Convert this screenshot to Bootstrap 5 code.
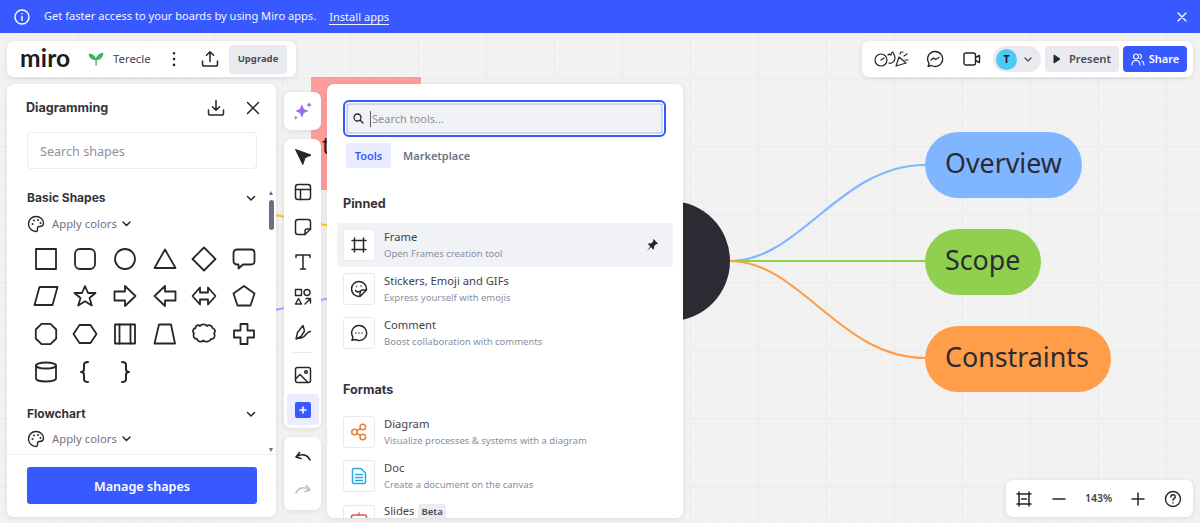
<!DOCTYPE html>
<html lang="en">
<head>
<meta charset="UTF-8">
<meta name="viewport" content="width=device-width, initial-scale=1.0">
<title>Miro board</title>
<link href="https://cdn.jsdelivr.net/npm/bootstrap@5.3.0/dist/css/bootstrap.min.css" rel="stylesheet">
<style>
html, body { height: 100%; }
body {
  margin: 0; position: relative; height: 523px; overflow: hidden;
  font-family: "Noto Sans", sans-serif; font-size: 12px; color: #2b2c33;
  background-color: #f2f2f2;
  background-image:
    linear-gradient(#ebebeb 1px, transparent 1px), linear-gradient(90deg, #ebebeb 1px, transparent 1px),
    linear-gradient(#efefef 1px, transparent 1px), linear-gradient(90deg, #efefef 1px, transparent 1px);
  background-size: 68px 68px, 68px 68px, 13.6px 13.6px, 13.6px 13.6px;
  background-position: 10px 10px;
}
.ico { fill: none; stroke-linecap: round; stroke-linejoin: round; display: block; flex: none; }
.ico:not([stroke]) { stroke: #26262b; }
.ico:not([stroke-width]) { stroke-width: 1.8; }

/* board */
.board-lines { position: absolute; left: 0; top: 0; }
.sticky-red { position: absolute; left: 311px; top: 77px; width: 110px; height: 113px; background: #ff9d9d; }
.sticky-letter { position: absolute; left: 322px; top: 130px; font-size: 24px; line-height: 30px; color: #222; }
.mind-node {
  position: absolute; left: 925px; height: 66px; border-radius: 33px; padding: 0 0 3px 20px;
  display: flex; align-items: center; font-size: 26.8px; color: #2b2c33;
}
.node-blue { top: 132px; width: 157px; background: #80b5ff; }
.node-green { top: 229px; width: 116px; background: #8fd14f; }
.node-orange { top: 326px; width: 186px; background: #ff9d48; }

/* banner */
.promo-bar { position: relative; height: 33px; background: #3859ff; color: #f4f5ff; padding: 0 14px; font-size: 11.1px; }
.promo-text { margin-left: 14px; }
.promo-link { margin-left: 13px; color: #f4f5ff; text-decoration: none; border-bottom: 1px solid #f4f5ff; line-height: 15px; }
.promo-close { margin-left: auto; margin-right: -2px; }

/* floating panels */
.float-panel { position: relative; background: #fff; border-radius: 7px; box-shadow: 0 1px 5px rgba(30,30,50,.1); }
.top-row { position: relative; padding: 8px 7px 0; }
.board-bar { width: 289px; height: 36px; padding: 0 3px 0 13px; }
.miro-word { font-family: "Lato", sans-serif; font-weight: 700; font-size: 24.5px; line-height: 36px; width: 52px; letter-spacing: .2px; color: #1c1c1e; margin-top: -3px; }
.sprout { margin-left: 16px; flex: none; }
.board-name { margin-left: 9px; width: 58px; color: #3f4149; font-size: 11.4px; }
.upload-ico { margin-left: 24px; }
.btn-upgrade { width: 58px; height: 29px; padding: 0; margin-left: 10px; background: #e9eaef; border: 0; border-radius: 4px; font-size: 9.5px; font-weight: 700; color: #4a4c57; }
.collab-bar { width: 331px; height: 36px; padding: 0 6px 0 12px; }
.chat-ico { margin-left: 16px; }
.video-ico { margin-left: 19px; }
.avatar-pill { width: 48px; height: 26px; border-radius: 13px; background: #e9eaef; padding: 0 4px 0 3px; margin-left: 12px; }
.avatar-dot { width: 21px; height: 21px; border-radius: 50%; background: #4cc9f5; font-size: 10.5px; font-weight: 700; line-height: 21px; text-align: center; color: #1c1c1e; }
.btn-present { width: 74px; height: 26px; padding: 0; margin-left: 4px; background: #e9eaef; border: 0; border-radius: 4px; font-size: 11.3px; font-weight: 600; color: #4a4c57; }
.btn-share { width: 64px; height: 26px; padding: 0; margin-left: 4px; background: #3859ff; border: 0; border-radius: 4px; font-size: 11px; font-weight: 600; color: #fff; }
.btn-share:hover, .btn-manage:hover { background: #3859ff; color: #fff; }

.work-row { position: relative; padding: 7px 0 0 7px; }
.shapes-panel { width: 269px; height: 433px; }
.panel-title { font-family: "Inter", sans-serif; font-weight: 700; font-size: 12.6px; color: #33343b; margin: 0; }
.section-title { font-size: 12px; }
.shapes-head { height: 48px; padding: 0 16px 0 19px; }
.head-icons { gap: 21px; }
.shapes-search {
  width: 230px; height: 37px; margin-left: 20px; font-size: 12.6px; border: 1px solid #ebecf0; border-radius: 4px; padding: 1px 12px 0; color: #2b2c33;
}
.shapes-search::placeholder { color: #8d90a0; opacity: 1; }
.shapes-scroll { position: relative; height: 285px; overflow: hidden; padding: 20px 0 0 20px; }
.section-head { width: 229px; height: 18px; }
.apply-row { height: 18px; margin-top: 8px; color: #70727e; font-size: 11.3px; }
.apply-label { margin-left: 7px; }
.apply-chevron { margin-left: 5px; }
.shape-grid { display: grid; grid-template-columns: repeat(6, 39.6px); grid-auto-rows: 37.6px; margin: 7px 0 0 -1px; justify-items: center; align-items: center; }
.flow-head { margin-top: 15px; }
.flow-head + .apply-row { margin-top: 7px; }
.scroll-track { position: absolute; right: 0; top: 20px; width: 9px; height: 265px; }
.scroll-thumb { position: absolute; left: 2px; top: 11px; width: 5px; height: 30px; border-radius: 3px; background: #69708a; }
.scroll-up, .scroll-down { position: absolute; left: 2px; width: 0; height: 0; border-left: 2.5px solid transparent; border-right: 2.5px solid transparent; }
.scroll-up { top: 2px; border-bottom: 4px solid #69708a; }
.scroll-down { bottom: 2px; border-top: 4px solid #69708a; }
.shapes-foot { border-top: 1px solid #f0f0f3; height: 63px; padding: 12px 0 0 20px; }
.btn-manage { width: 230px; height: 37px; padding: 3px 0 0; background: #3859ff; color: #fff; border: 0; border-radius: 3px; font-weight: 600; font-size: 12.6px; }

.tool-col { width: 37px; margin-left: 8px; padding-top: 8px; }
.tool-ai { height: 38px; }
.tool-main { height: 289px; margin-top: 9px; }
.tool-undo { height: 73px; margin-top: 9px; }
.tool-cell { height: 35px; }
.tool-sep { width: 19px; height: 1px; background: #e9eaef; margin: 3px auto 4px; }
.tool-plus { width: 32px; height: 31px; margin: 2px auto 0; background: #e9edff; border-radius: 3px; }
.plus-tile { width: 16px; height: 16px; background: #3859ff; border-radius: 2px; }

.tools-panel { width: 356px; height: 434px; margin-left: 6px; overflow: hidden; }
.tool-search { width: 323px; height: 37px; margin: 16px 0 0 16px; background: #f1f2f5; border: 2px solid #3859ff; border-radius: 6px; box-shadow: inset 0 0 0 1.5px #fff, inset 0 0 0 2.5px #a9b5ff; padding: 0 0 0 8px; }
.tool-search input { border: 0; background: transparent; padding: 0 0 1px; font-size: 11px; height: 100%; margin-left: 1px; box-shadow: none; color: #2b2c33; }
.tool-search input::placeholder { color: #8d90a0; opacity: 1; }
.caret-mark { width: 1px; height: 16px; background: #5b5d68; margin-left: 6px; flex: none; }
.tab-row { margin: 6px 0 0 19px; gap: 12px; }
.tab-row .nav-link { padding: 0; height: 25px; line-height: 25px; font-size: 11px; font-weight: 600; color: #6e7186; border-radius: 3px; }
.tab-row .nav-link.active { width: 45px; text-align: center; background: #e9edff; color: #3859ff; }
.group-title { font-family: "Inter", sans-serif; font-weight: 700; font-size: 12.6px; color: #33343b; margin: 0 0 0 16px; line-height: 16px; }
.pinned-title { margin-top: 28px; }
.formats-title { margin-top: 27px; }
.tool-list { margin: 11px 0 0 10px; width: 336px; border-radius: 0; }
.formats-title + .tool-list { margin-top: 12px; }
.tool-list .list-group-item { border: 0; background: transparent; padding: 7px 6px; height: 44px; display: flex; align-items: center; color: #2b2c33; border-radius: 4px; }
.tool-list .list-group-item.row-hover { background: #f1f2f5; }
.tool-box { width: 32px; height: 32px; background: #fff; border: 1px solid #e9eaef; border-radius: 3px; display: flex; align-items: center; justify-content: center; flex: none; margin-right: 9px; }
.tool-text { margin-top: -2px; }
.tool-name { font-size: 11.2px; line-height: 15px; color: #3f4149; display: block; }
.tool-desc { font-size: 9.5px; line-height: 13px; color: #8a8d9e; display: block; margin-top: 3px; }
.beta-tag { background: #ebecf0; color: #4a4c57; font-size: 9.5px; font-weight: 600; padding: 1px 3px; border-radius: 3px; margin-left: 4px; }

.zoom-bar { position: absolute; left: 1006px; top: 480px; width: 187px; height: 37px; padding: 0 11px 0 9px; }
.zoom-num { font-size: 10.5px; font-weight: 600; color: #3f4149; }
</style>
</head>
<body>

<!-- board contents -->
<div class="sticky-red"></div>
<div class="sticky-letter">t</div>
<svg class="board-lines" width="1200" height="523" fill="none" stroke-width="2.2">
  <circle cx="670" cy="261" r="60" fill="#2b2c33"/>
  <path d="M730 261C800 261 840 165 925 165" stroke="#80b5ff"/>
  <path d="M730 261H925" stroke="#8fd14f"/>
  <path d="M730 261C800 261 840 358 925 358" stroke="#ff9d48"/>
  <path d="M275 215L330 226" stroke="#fac710"/>
  <path d="M275 310L330 298" stroke="#a6a6ff"/>
</svg>
<div class="mind-node node-blue">Overview</div>
<div class="mind-node node-green">Scope</div>
<div class="mind-node node-orange">Constraints</div>

<!-- banner -->
<div class="promo-bar d-flex align-items-center">
  <svg class="ico" width="16" height="16" viewBox="0 0 16 16" stroke="#fff" stroke-width="1.4"><circle cx="8" cy="8" r="7"/><path d="M8 7.400v4M8 4.600v.2"/></svg>
  <span class="promo-text">Get faster access to your boards by using Miro apps.</span>
  <a class="promo-link" href="#">Install apps</a>
  <svg class="ico promo-close" width="12" height="12" viewBox="0 0 12 12" stroke="#fff" stroke-width="1.3"><path d="M2 2l8 8M10 2l-8 8"/></svg>
</div>

<!-- top bars -->
<div class="top-row d-flex justify-content-between">
  <div class="float-panel board-bar d-flex align-items-center">
    <span class="miro-word">miro</span>
    <svg class="sprout" width="16" height="14" viewBox="0 0 16 14"><path d="M7.400 13.500V8C4 8 1 6.500.6 1.800 4.500 1.600 7 3.500 8 6.500 8.800 3.500 11 1.200 15.400.8 15.200 5.500 12.500 8 8.800 8v5.500z" fill="#3eb35f"/></svg>
    <span class="board-name">Terecle</span>
    <svg class="ico" width="6" height="16" viewBox="0 0 6 16" stroke-width="2.6"><path d="M3 2.200v.1M3 8v.1M3 13.800v.1"/></svg>
    <svg class="ico upload-ico" width="18" height="18" viewBox="0 0 18 18" stroke-width="1.5"><path d="M9 11.500V2M5.500 5.200L9 1.700l3.500 3.500M1.500 11v3.200c0 1 .8 1.800 1.800 1.800h11.400c1 0 1.800-.8 1.800-1.800V11"/></svg>
    <button type="button" class="btn btn-upgrade">Upgrade</button>
  </div>
  <div class="float-panel collab-bar d-flex align-items-center">
    <svg class="ico" width="36" height="20" viewBox="0 0 36 20" stroke-width="1.2"><circle cx="7" cy="11" r="6"/><path d="M7 11l3-2"/><path d="M14 6c1-1 2-1 3 0 0-2 1-3 2-3 0 2 2 3 2 6 0 4-4 6-6 5"/><path d="M22 17l3-9 7 6zM26 5l1-2M30 7l3-2M31 11l3 0M28 3l1 0"/></svg>
    <svg class="ico chat-ico" width="18" height="18" viewBox="0 0 18 18" stroke-width="1.4"><path d="M9 1.500a7.500 7.500 0 1 1-3.600 14l-3.200.8.800-3A7.500 7.500 0 0 1 9 1.500z"/><path d="M5 10l2.500-2 2 1.500L13 7.500"/></svg>
    <svg class="ico video-ico" width="18" height="16" viewBox="0 0 18 16" stroke-width="1.4"><rect x="1" y="2" width="11.500" height="12" rx="2"/><path d="M12.500 6.500l4-2v7l-4-2"/></svg>
    <div class="avatar-pill d-flex align-items-center justify-content-between">
      <span class="avatar-dot">T</span>
      <svg class="ico me-1" width="10" height="7" viewBox="0 0 10 7" stroke="#4a4c57" stroke-width="1.3"><path d="M2 2l3 3 3-3"/></svg>
    </div>
    <button type="button" class="btn btn-present d-flex align-items-center justify-content-center gap-2">
      <svg width="8" height="10" viewBox="0 0 8 10"><path d="M1 1l6 4-6 4z" fill="#26262b" stroke="#26262b" stroke-linejoin="round"/></svg>Present
    </button>
    <button type="button" class="btn btn-share d-flex align-items-center justify-content-center gap-1">
      <svg class="ico" width="14" height="13" viewBox="0 0 14 13" stroke="#fff" stroke-width="1.1"><circle cx="5" cy="3.500" r="2.500"/><path d="M1 12c0-3 2-4.500 4-4.500S9 9 9 12M9 1.200a2.500 2.500 0 0 1 0 4.500M11 8c1.500.8 2 2 2 4"/></svg>Share
    </button>
  </div>
</div>

<!-- panels -->
<div class="work-row d-flex align-items-start">
  <div class="float-panel shapes-panel">
    <div class="shapes-head d-flex align-items-center justify-content-between">
      <h2 class="panel-title">Diagramming</h2>
      <div class="head-icons d-flex align-items-center">
        <svg class="ico" width="18" height="18" viewBox="0 0 18 18" stroke-width="1.5"><path d="M9 1.500V11M5.500 7.800L9 11.300l3.500-3.500M1.500 11v3.200c0 1 .8 1.800 1.800 1.800h11.400c1 0 1.800-.8 1.800-1.800V11"/></svg>
        <svg class="ico" width="14" height="14" viewBox="0 0 14 14" stroke-width="1.5"><path d="M1.500 1.500l11 11M12.500 1.500l-11 11"/></svg>
      </div>
    </div>
    <input class="form-control shapes-search" type="text" placeholder="Search shapes">
    <div class="shapes-scroll">
      <div class="section-head d-flex align-items-center justify-content-between">
        <h3 class="panel-title section-title">Basic Shapes</h3>
        <svg class="ico" width="10" height="7" viewBox="0 0 10 7" stroke-width="1.5"><path d="M1.500 1.500L5 5l3.500-3.500"/></svg>
      </div>
      <div class="apply-row d-flex align-items-center">
        <svg class="ico" width="18" height="18" viewBox="0 0 18 18" stroke-width="1.4"><path d="M9 1.500c4.500 0 7.500 3 7.500 6.500 0 2.500-2 3.500-4 3.500-1.500 0-2.500 1-2 2.500.3 1.500-.5 2.500-1.500 2.500C5 16.500 1.500 13 1.500 9S4.500 1.500 9 1.500z"/><path d="M5.500 9v.1M7 5.500v.1M11 5v.1M13.500 8v.1" stroke-width="2"/></svg>
        <span class="apply-label">Apply colors</span>
        <svg class="ico apply-chevron" width="9" height="6" viewBox="0 0 9 6" stroke-width="1.5"><path d="M1 1l3.500 3.500L8 1"/></svg>
      </div>
      <div class="shape-grid">
        <svg class="ico" width="24" height="24" viewBox="0 0 24 24"><rect x="2" y="2" width="20" height="20"/></svg>
        <svg class="ico" width="24" height="24" viewBox="0 0 24 24"><rect x="2" y="2" width="20" height="20" rx="5"/></svg>
        <svg class="ico" width="24" height="24" viewBox="0 0 24 24"><circle cx="12" cy="12" r="10"/></svg>
        <svg class="ico" width="24" height="24" viewBox="0 0 24 24"><path d="M12 2.500L22.500 21h-21z"/></svg>
        <svg class="ico" width="26" height="26" viewBox="0 0 26 26"><path d="M13 1.500L24.500 13 13 24.500 1.500 13z"/></svg>
        <svg class="ico" width="24" height="24" viewBox="0 0 24 24"><path d="M5 2.500h14c2 0 3.500 1.500 3.500 3.500v8c0 2-1.500 3.500-3.500 3.500H11l-4.500 4v-4H5c-2 0-3.500-1.500-3.500-3.500V6C1.500 4 3 2.500 5 2.500z"/></svg>

        <svg class="ico" width="26" height="24" viewBox="0 0 26 24"><path d="M6.500 3h18L19.500 21h-18z"/></svg>
        <svg class="ico" width="24" height="24" viewBox="0 0 24 24"><path d="M12 2l3 7h7.500l-6 5 2.300 7.500L12 17.200 5.200 21.500 7.500 14l-6-5H9z"/></svg>
        <svg class="ico" width="24" height="24" viewBox="0 0 24 24"><path d="M1.500 7.500H12V2l10.500 10L12 22v-5.500H1.500z"/></svg>
        <svg class="ico" width="24" height="24" viewBox="0 0 24 24"><path d="M22.500 7.500H12V2L1.500 12 12 22v-5.500h10.500z"/></svg>
        <svg class="ico" width="26" height="24" viewBox="0 0 26 24"><path d="M1.500 12L9 3.500v5h8v-5l7.500 8.500-7.500 8.500v-5H9v5z"/></svg>
        <svg class="ico" width="24" height="24" viewBox="0 0 24 24"><path d="M12 2l10.500 7.500-4 12h-13l-4-12z"/></svg>

        <svg class="ico" width="24" height="24" viewBox="0 0 24 24"><path d="M7.500 1.800h9l5.700 5.700v9l-5.700 5.700h-9l-5.700-5.700v-9z"/></svg>
        <svg class="ico" width="26" height="24" viewBox="0 0 26 24"><path d="M7.500 3h11l6 9-6 9h-11l-6-9z"/></svg>
        <svg class="ico" width="24" height="24" viewBox="0 0 24 24"><rect x="2" y="2.500" width="20" height="19"/><path d="M6.500 2.500v19M17.500 2.500v19"/></svg>
        <svg class="ico" width="24" height="24" viewBox="0 0 24 24"><path d="M6 2.500h12l4 19H1.500z"/></svg>
        <svg class="ico" width="26" height="24" viewBox="0 0 26 24"><path d="M9 4c1.500-2 5-2.500 7 0 1.500-1.500 5-1 5.500 2 2.500 1 3.500 3.500 1.500 5.500 2 2.500 0 6-3 5.500-1 3-6 3.500-7.500 1.500-2 2-6 1.500-6.500-1.500-3 0-4.500-3-3-5.500-2-2-1-5 1.500-5.500 0-3 3-3.500 4.500-2z"/></svg>
        <svg class="ico" width="24" height="24" viewBox="0 0 24 24"><path d="M8.500 2h7v6.500H22v7h-6.500V22h-7v-6.500H2v-7h6.500z"/></svg>

        <svg class="ico" width="24" height="24" viewBox="0 0 24 24"><ellipse cx="12" cy="5.500" rx="10" ry="3"/><path d="M2 5.500v13c0 1.700 4.500 3 10 3s10-1.300 10-3v-13"/></svg>
        <svg class="ico" width="24" height="24" viewBox="0 0 24 24" stroke-width="2"><path d="M15 2c-3 0-4 1-4 3v4c0 2-1 3-3 3 2 0 3 1 3 3v4c0 2 1 3 4 3"/></svg>
        <svg class="ico" width="24" height="24" viewBox="0 0 24 24" stroke-width="2"><path d="M9 2c3 0 4 1 4 3v4c0 2 1 3 3 3-2 0-3 1-3 3v4c0 2-1 3-4 3"/></svg>
      </div>
      <div class="section-head flow-head d-flex align-items-center justify-content-between">
        <h3 class="panel-title section-title">Flowchart</h3>
        <svg class="ico" width="10" height="7" viewBox="0 0 10 7" stroke-width="1.5"><path d="M1.500 1.500L5 5l3.500-3.500"/></svg>
      </div>
      <div class="apply-row d-flex align-items-center">
        <svg class="ico" width="18" height="18" viewBox="0 0 18 18" stroke-width="1.4"><path d="M9 1.500c4.500 0 7.500 3 7.500 6.500 0 2.500-2 3.500-4 3.500-1.500 0-2.500 1-2 2.500.3 1.500-.5 2.500-1.500 2.500C5 16.500 1.500 13 1.500 9S4.500 1.500 9 1.500z"/><path d="M5.500 9v.1M7 5.500v.1M11 5v.1M13.500 8v.1" stroke-width="2"/></svg>
        <span class="apply-label">Apply colors</span>
        <svg class="ico apply-chevron" width="9" height="6" viewBox="0 0 9 6" stroke-width="1.5"><path d="M1 1l3.500 3.500L8 1"/></svg>
      </div>
      <div class="scroll-track"><span class="scroll-up"></span><span class="scroll-thumb"></span><span class="scroll-down"></span></div>
    </div>
    <div class="shapes-foot">
      <button type="button" class="btn btn-manage">Manage shapes</button>
    </div>
  </div>

  <div class="tool-col">
    <div class="float-panel tool-ai d-flex align-items-center justify-content-center">
      <svg width="20" height="20" viewBox="0 0 18 18" fill="#9a6cf0"><path d="M8 3l1.800 4.200L14 9l-4.200 1.800L8 15l-1.800-4.200L2 9l4.200-1.800zM14.500 1l.7 1.800 1.800.7-1.800.7-.7 1.800-.7-1.800-1.800-.7 1.800-.7zM2.500 13l.5 1.500 1.500.5-1.500.5-.5 1.500-.5-1.500L.5 15l1.500-.5z"/></svg>
    </div>
    <div class="float-panel tool-main">
      <div class="tool-cell d-flex align-items-center justify-content-center">
        <svg width="18" height="18" viewBox="0 0 18 18"><path d="M1.500 1.500l15.500 5.500-6 2.800-2.200 6.700z" fill="#26262b" stroke="#26262b" stroke-linejoin="round"/></svg>
      </div>
      <div class="tool-cell d-flex align-items-center justify-content-center">
        <svg class="ico" width="18" height="18" viewBox="0 0 18 18" stroke-width="1.5"><rect x="1.500" y="1.500" width="15" height="15" rx="2.500"/><path d="M1.500 6.500h15M6.500 6.500v10"/></svg>
      </div>
      <div class="tool-cell d-flex align-items-center justify-content-center">
        <svg class="ico" width="18" height="18" viewBox="0 0 18 18" stroke-width="1.5"><path d="M4 1.500h10c1.400 0 2.500 1.100 2.500 2.500v7L11 16.500H4c-1.400 0-2.500-1.100-2.500-2.500V4c0-1.400 1.100-2.500 2.500-2.500z"/><path d="M16.500 11H13c-1.100 0-2 .9-2 2v3.500"/></svg>
      </div>
      <div class="tool-cell d-flex align-items-center justify-content-center">
        <svg class="ico" width="18" height="18" viewBox="0 0 18 18" stroke-width="1.5"><path d="M2 4.500V2h14v2.500M9 2v14M6.500 16h5"/></svg>
      </div>
      <div class="tool-cell d-flex align-items-center justify-content-center">
        <svg class="ico" width="18" height="18" viewBox="0 0 18 18" stroke-width="1.4"><rect x="1.500" y="1.500" width="6" height="6"/><circle cx="13" cy="4.500" r="3"/><path d="M4.500 10.500l3 5.500h-6zM11 16l5.500-5.500M12 10.500h4.500V15"/></svg>
      </div>
      <div class="tool-cell d-flex align-items-center justify-content-center">
        <svg class="ico" width="18" height="18" viewBox="0 0 18 18" stroke-width="1.4"><path d="M2 16l1.500-6.500L9 2.500l1.500 5.500-3.500 5.500zM3 15.500c4 0 7-1.500 8.500-3.500s3-3.500 5-3.500"/></svg>
      </div>
      <div class="tool-sep"></div>
      <div class="tool-cell d-flex align-items-center justify-content-center">
        <svg class="ico" width="18" height="18" viewBox="0 0 18 18" stroke-width="1.5"><rect x="1.500" y="1.500" width="15" height="15" rx="2"/><circle cx="12" cy="6" r="1.300"/><path d="M1.500 13L6 8.500l8 8"/></svg>
      </div>
      <div class="tool-plus d-flex align-items-center justify-content-center">
        <div class="plus-tile d-flex align-items-center justify-content-center">
          <svg class="ico" width="8" height="8" viewBox="0 0 8 8" stroke="#fff" stroke-width="1.5"><path d="M4 1v6M1 4h6"/></svg>
        </div>
      </div>
    </div>
    <div class="float-panel tool-undo d-flex flex-column align-items-center justify-content-around py-1">
      <svg class="ico" width="18" height="14" viewBox="0 0 18 14" stroke-width="1.6"><path d="M5.500 2.500L2 7l5 1.500M2.500 6.500C7 3.500 13 4 16 10"/></svg>
      <svg class="ico" width="18" height="14" viewBox="0 0 18 14" stroke="#bcbec9" stroke-width="1.6"><path d="M12.500 2.500L16 7l-5 1.500M15.500 6.500C11 3.500 5 4 2 10"/></svg>
    </div>
  </div>

  <div class="float-panel tools-panel">
    <div class="tool-search d-flex align-items-center">
      <svg class="ico" width="11" height="11" viewBox="0 0 11 11" stroke-width="1.3"><circle cx="4.500" cy="4.500" r="3.500"/><path d="M7.200 7.200L10 10"/></svg>
      <span class="caret-mark"></span>
      <input class="form-control" type="text" placeholder="Search tools...">
    </div>
    <ul class="nav tab-row">
      <li class="nav-item"><a class="nav-link active" href="#">Tools</a></li>
      <li class="nav-item"><a class="nav-link" href="#">Marketplace</a></li>
    </ul>

    <h3 class="group-title pinned-title">Pinned</h3>
    <div class="list-group tool-list">
      <div class="list-group-item row-hover">
        <span class="tool-box"><svg class="ico" width="16" height="16" viewBox="0 0 16 16" stroke-width="1.5"><path d="M3.500 1v14M12.500 1v14M1 3.500h14M1 12.500h14"/></svg></span>
        <div class="tool-text flex-grow-1"><span class="tool-name">Frame</span><span class="tool-desc">Open Frames creation tool</span></div>
        <svg width="14" height="14" viewBox="0 0 14 14" class="me-2"><path d="M8.500 1l4.500 4.500-1 .8-.8-.2L9 8.500l.2 2-1 1-2.200-2.200L2 13l3.300-4.500L3 6.300l1-1 2 .2L8.300 3.200 8 2z" fill="#26262b"/></svg>
      </div>
      <div class="list-group-item">
        <span class="tool-box"><svg class="ico" width="18" height="18" viewBox="0 0 18 18" stroke-width="1.5"><path d="M16.500 9.500A7.500 7.500 0 1 0 9 16.500c1 0 1.500-.3 2-1l4.500-4.500c.6-.5 1-1 1-1.500z"/><path d="M16 10h-3c-2 0-3 1-3 3v3M5.500 10.500C6.500 12 8 12 9 11.500M6.500 6.500v.1M11 6v.1" /></svg></span>
        <div class="tool-text"><span class="tool-name">Stickers, Emoji and GIFs</span><span class="tool-desc">Express yourself with emojis</span></div>
      </div>
      <div class="list-group-item">
        <span class="tool-box"><svg class="ico" width="18" height="18" viewBox="0 0 18 18" stroke-width="1.5"><path d="M9 1.500a7.500 7.500 0 1 1-3.600 14l-3.400.8.900-3.200A7.500 7.500 0 0 1 9 1.500z"/><path d="M6 9v.1M9 9v.1M12 9v.1"/></svg></span>
        <div class="tool-text"><span class="tool-name">Comment</span><span class="tool-desc">Boost collaboration with comments</span></div>
      </div>
    </div>

    <h3 class="group-title formats-title">Formats</h3>
    <div class="list-group tool-list">
      <div class="list-group-item">
        <span class="tool-box"><svg class="ico" width="18" height="18" viewBox="0 0 18 18" stroke="#e9822e" stroke-width="1.5"><circle cx="4.500" cy="9" r="2.800"/><circle cx="12.800" cy="4" r="2.800"/><circle cx="12.800" cy="14" r="2.800"/><path d="M6.800 7.500l3.700-2.200M6.800 10.500l3.700 2.200"/></svg></span>
        <div class="tool-text"><span class="tool-name">Diagram</span><span class="tool-desc">Visualize processes &amp; systems with a diagram</span></div>
      </div>
      <div class="list-group-item">
        <span class="tool-box"><svg class="ico" width="18" height="18" viewBox="0 0 18 18" stroke="#2aa8e0" stroke-width="1.5"><path d="M4 1.500h7l4.500 4.500v9c0 .8-.7 1.500-1.500 1.500H4c-.8 0-1.500-.7-1.500-1.500V3c0-.8.7-1.500 1.500-1.500z"/><path d="M5.500 7.500h7M5.500 10.500h7M5.500 13.500h7"/></svg></span>
        <div class="tool-text"><span class="tool-name">Doc</span><span class="tool-desc">Create a document on the canvas</span></div>
      </div>
      <div class="list-group-item align-items-start">
        <span class="tool-box"><svg class="ico" width="18" height="18" viewBox="0 0 18 18" stroke="#e5534b" stroke-width="1.5"><rect x="1.500" y="3" width="15" height="13" rx="2"/><path d="M9 1v2"/></svg></span>
        <div class="tool-text"><span class="tool-name">Slides<span class="beta-tag">Beta</span></span></div>
      </div>
    </div>
  </div>
</div>

<!-- zoom controls -->
<div class="float-panel zoom-bar d-flex align-items-center justify-content-between">
  <svg class="ico" width="18" height="18" viewBox="0 0 18 18" stroke-width="1.5"><path d="M4 2v14M14 2v14M2 4h14M2 14h14M6.500 9h5"/></svg>
  <svg class="ico" width="14" height="14" viewBox="0 0 14 14" stroke-width="1.5"><path d="M1 7h12"/></svg>
  <span class="zoom-num">143%</span>
  <svg class="ico" width="14" height="14" viewBox="0 0 14 14" stroke-width="1.5"><path d="M1 7h12M7 1v12"/></svg>
  <svg class="ico" width="18" height="18" viewBox="0 0 18 18" stroke-width="1.4"><circle cx="9" cy="9" r="7.500"/><path d="M6.800 7c0-1.300 1-2.200 2.200-2.200s2.200.9 2.200 2.100c0 1.700-2.200 1.800-2.200 3.400M9 12.800v.1"/></svg>
</div>

<script src="https://cdn.jsdelivr.net/npm/bootstrap@5.3.0/dist/js/bootstrap.bundle.min.js"></script>
</body>
</html>
